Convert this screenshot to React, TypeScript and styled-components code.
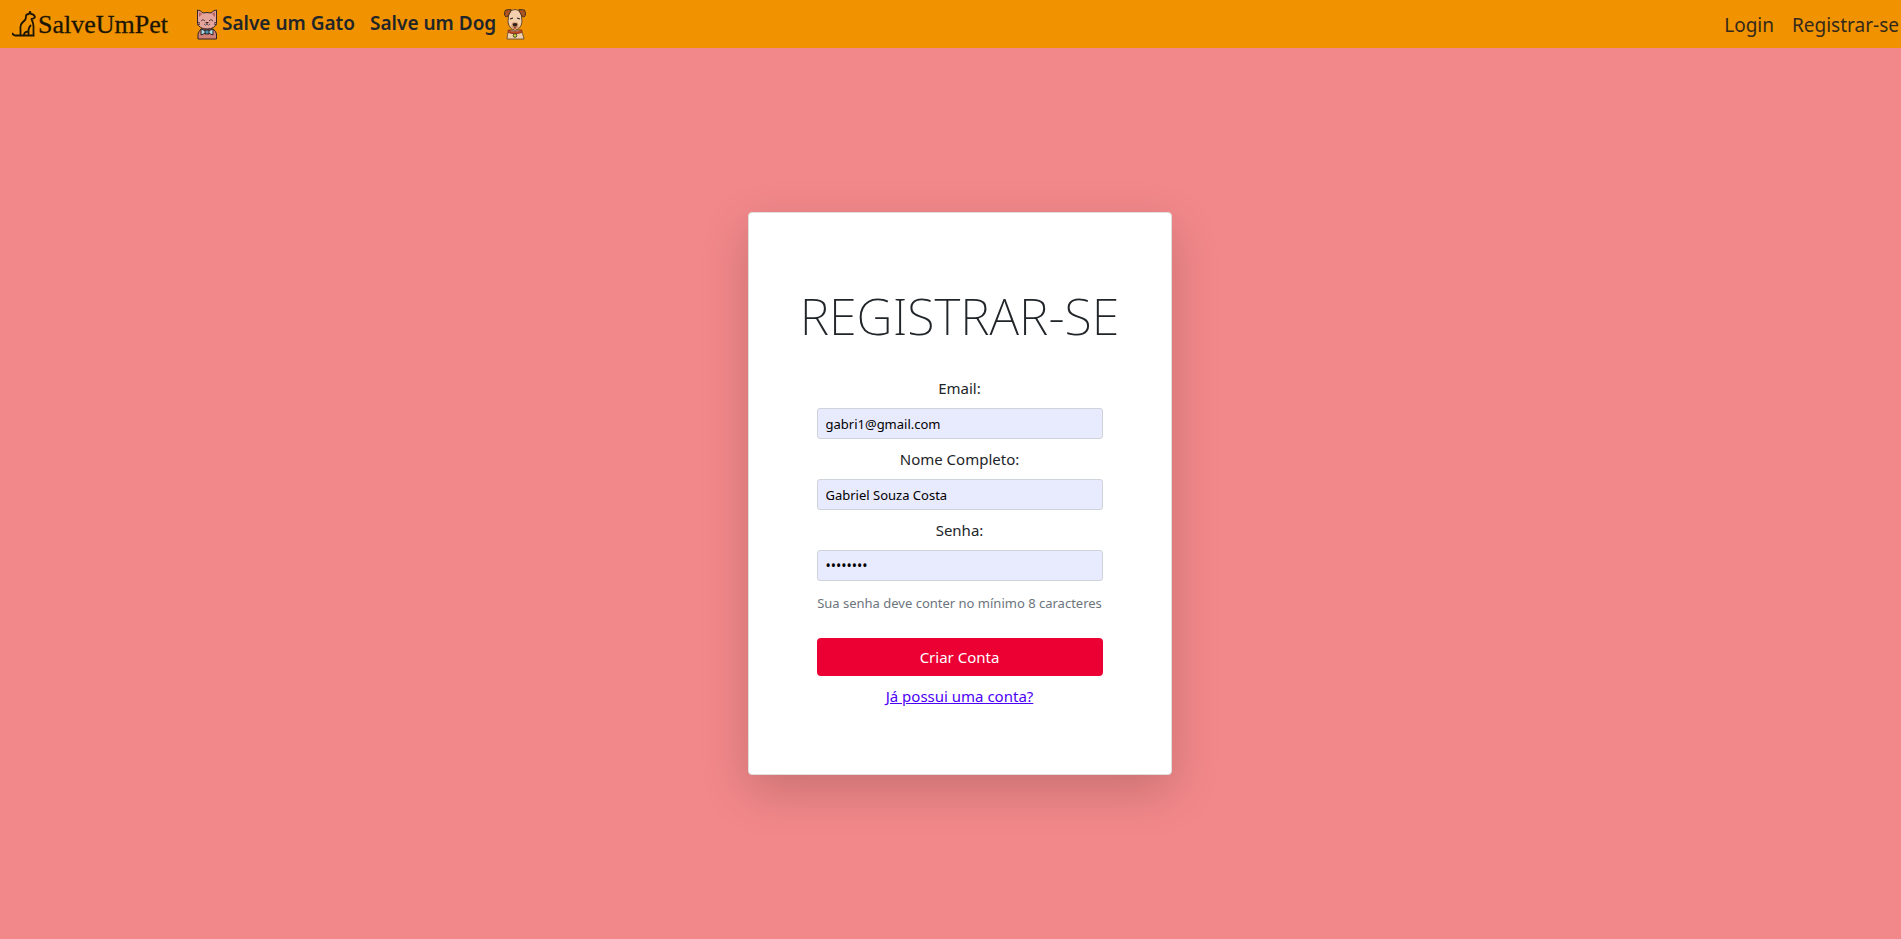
import React from "react";
import styled, { createGlobalStyle } from "styled-components";

const GlobalStyle = createGlobalStyle`
  *, *::before, *::after { box-sizing: border-box; }
  html, body, #root { height: 100%; }
  body {
    margin: 0;
    overflow-x: hidden;
    background: #f2888a;
    color: #212529;
    font-family: "Noto Sans", "Liberation Sans", sans-serif;
    font-size: 15px;
    line-height: 24px;
  }
`;

const Page = styled.div`
  display: flex;
  flex-direction: column;
  min-height: 100%;
`;

const Header = styled.header`
  display: flex;
  align-items: center;
  justify-content: space-between;
  height: 48px;
  padding: 0 2px 0 12px;
  background: #f19300;
`;

const Nav = styled.nav`
  display: flex;
  align-items: center;
`;

const Brand = styled.a`
  display: flex;
  align-items: center;
  margin-right: 28px;
  padding-top: 2px;
  color: #1d1503;
  font-family: "Liberation Serif", serif;
  font-size: 26px;
  line-height: 32px;
  text-decoration: none;
  -webkit-text-stroke: 0.3px #1d1503;
`;

const PetLink = styled.a<{ $gap: number }>`
  display: flex;
  align-items: center;
  gap: ${({ $gap }) => $gap}px;
  margin-right: 15px;
  color: #212529;
  font-size: 19px;
  font-weight: 600;
  line-height: 30px;
  text-decoration: none;
`;

const PetName = styled.span`
  padding-bottom: 2px;
`;

const PetIcon = styled.svg`
  display: block;
  width: 22px;
  height: 32px;
`;

const AccountNav = styled(Nav)`
  gap: 18px;
  padding-top: 2px;
`;

const AccountLink = styled.a`
  color: #34291a;
  font-size: 19px;
  line-height: 30px;
  text-decoration: none;
`;

const Main = styled.main`
  display: flex;
  flex: 1;
  align-items: center;
  justify-content: center;
  padding-left: 18px;
`;

const Card = styled.section`
  display: flex;
  flex-direction: column;
  align-items: center;
  width: 100%;
  max-width: 424px;
  padding: 71px 48px 66px;
  border: 1px solid #dfdfdf;
  border-radius: 4px;
  background: #fff;
  box-shadow: 0 16px 48px rgba(0, 0, 0, 0.175);
`;

const Title = styled.h1`
  margin: 0 0 28px;
  font-size: 50px;
  font-weight: 200;
  line-height: 64px;
  white-space: nowrap;
`;

const Form = styled.form`
  display: flex;
  flex-direction: column;
  width: 100%;
  max-width: 286px;
  text-align: center;
`;

const Label = styled.label`
  margin-bottom: 8px;
`;

const Input = styled.input`
  width: 100%;
  height: 31px;
  margin-bottom: 8px;
  padding: 4px 8px;
  border: 1px solid #ced4da;
  border-radius: 3px;
  background: #e8eafe;
  color: #000;
  font-family: inherit;
  font-size: 13px;
  line-height: 21px;
`;

const PasswordInput = styled(Input)`
  font-size: 14px;
`;

const Hint = styled.small`
  margin: 4px 0 24px;
  color: #6c757d;
  font-size: 13px;
  line-height: 21px;
  white-space: nowrap;
`;

const SubmitButton = styled.button`
  height: 38px;
  margin-bottom: 8px;
  border: 0;
  border-radius: 4px;
  background: #ec0033;
  color: #fff;
  font-family: inherit;
  font-size: 15px;
  line-height: 24px;
`;

const LoginLink = styled.a`
  align-self: center;
  color: #4c00f5;
`;

const BrandMark = () => (
  <svg width="26" height="28" viewBox="0 0 26 28" fill="none" stroke="#1d1503" strokeWidth="1.8" strokeLinejoin="round" aria-hidden="true">
    <path d="M0 22Q1 24 3 24.500H22.500M8.500 24V18Q8 14 10 12L13 9Q14 8 14 5Q14 3 17 3L18 0.500L19 3Q22 3 23 6Q22 8 19.500 8Q21 11 21.500 15V24M12 24Q12 21 16 20.500M16.500 24V19Q17 16 19 14" />
  </svg>
);

const Cat = () => (
  <PetIcon viewBox="0 0 22 32" stroke="#332326" strokeWidth="1" strokeLinejoin="round" aria-hidden="true">
    <path d="M2 31V26Q3 23 5 21H17Q20 23 20.500 26V31Z" fill="#d38278" />
    <path d="M1.500 2Q4 2 7 5Q11 4 15 5Q18 2 20.500 2V15Q19 21 11 21Q3 21 1.500 15Z" fill="#e5a59d" />
    <path d="M3 4V9L6 6ZM19 4V9L16 6Z" fill="#bb625c" stroke="none" />
    <path d="M5 13Q7 10 9 13M13 13Q15 10 17 13M1 14L4 15M1 17L4 16M18 15L21 14M18 16L21 17" fill="none" strokeWidth="0.800" />
    <path d="M8 16Q10 18 11 16Q12 18 14 16" fill="#fff" strokeWidth="0.800" />
    <path d="M9 14H13L11 16Z" fill="#4a2520" stroke="none" />
    <path d="M5 21L10 23V25L5 27ZM17 21L12 23V25L17 27Z" fill="#a9dce6" />
    <rect x="9" y="22" width="4" height="4" fill="#4f91a8" />
  </PetIcon>
);

const Dog = () => (
  <PetIcon viewBox="0 0 22 32" strokeLinejoin="round" aria-hidden="true">
    <path d="M3 31Q3 26 5 22H17Q19 26 20 31Z" fill="#f2d1aa" stroke="#574030" strokeWidth="0.800" />
    <path d="M5 3Q11 0 17 3L18 14Q17 21 11 22Q5 21 4 14Z" fill="#f4cfae" stroke="#49301d" strokeWidth="0.800" />
    <path d="M7 1.500L1.500 2L0.500 5Q0 7 2 9L4 8L7 3ZM15 1.500L20.500 2L21.500 5Q22 7 20 9L18 8L15 3Z" fill="#af5420" stroke="#49301d" />
    <path d="M6 11L9 10M13 10L16 11" stroke="#30231e" strokeWidth="1.200" />
    <path d="M8 15Q11 13 14 15L15 20L11 22L7 20Z" fill="#d9a072" />
    <path d="M8.500 16Q11 14 13.500 16L12.500 18.500H9.500Z" fill="#30231e" />
    <path d="M9.500 19H12.500L11 21.500Z" fill="#b74a2c" />
    <path d="M4 22Q11 25 18 22V24.500Q11 27.500 4 24.500Z" fill="#c54722" stroke="#70301d" strokeWidth="0.600" />
    <circle cx="11" cy="27.500" r="1.800" fill="#d6d534" stroke="#454428" />
  </PetIcon>
);

export default function App() {
  return (
    <>
      <GlobalStyle />
      <Page>
        <Header>
          <Nav>
            <Brand href="#"><BrandMark />SalveUmPet</Brand>
            <PetLink href="#gatos" $gap={4}><Cat /><PetName>Salve um Gato</PetName></PetLink>
            <PetLink href="#dogs" $gap={8}><PetName>Salve um Dog</PetName><Dog /></PetLink>
          </Nav>
          <AccountNav>
            <AccountLink href="#login">Login</AccountLink>
            <AccountLink href="#registrar">Registrar-se</AccountLink>
          </AccountNav>
        </Header>
        <Main>
          <Card>
            <Title>REGISTRAR-SE</Title>
            <Form onSubmit={(event) => event.preventDefault()}>
              <Label htmlFor="email">Email:</Label>
              <Input id="email" type="email" defaultValue="gabri1@gmail.com" />
              <Label htmlFor="nome">Nome Completo:</Label>
              <Input id="nome" type="text" defaultValue="Gabriel Souza Costa" />
              <Label htmlFor="senha">Senha:</Label>
              <PasswordInput id="senha" type="password" defaultValue="12345678" aria-describedby="senha-dica" />
              <Hint id="senha-dica">Sua senha deve conter no mínimo 8 caracteres</Hint>
              <SubmitButton type="submit">Criar Conta</SubmitButton>
              <LoginLink href="#login">Já possui uma conta?</LoginLink>
            </Form>
          </Card>
        </Main>
      </Page>
    </>
  );
}
